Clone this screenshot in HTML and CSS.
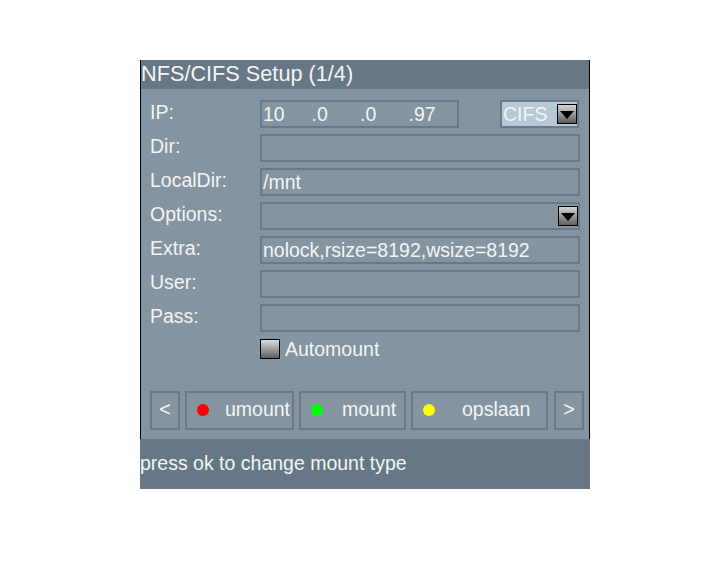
FILE: index.html
```html
<!DOCTYPE html>
<html lang="en">
<head>
    <meta charset="UTF-8">
    <title>NFS/CIFS Setup</title>
    <link rel="stylesheet" href="styles.css">
</head>
<body>
    <div class="screen">
        <div class="window">
            <div class="title">NFS/CIFS Setup (1/4)</div>
            <div class="content">
                <div class="row">
                    <span class="label">IP:</span>
                    <div class="field ip">
                        <span class="part">10</span>
                        <span class="part">.0</span>
                        <span class="part">.0</span>
                        <span class="part">.97</span>
                    </div>
                    <div class="select">
                        <span>CIFS</span>
                        <svg class="arrow" width="20" height="20" viewBox="0 0 20 20">
                            <defs>
                                <linearGradient id="g1" x1="0" y1="0" x2="0" y2="1">
                                    <stop offset="0" stop-color="#d8d8d8"/>
                                    <stop offset="1" stop-color="#5a5a5a"/>
                                </linearGradient>
                            </defs>
                            <rect x="0.5" y="0.5" width="19" height="19" fill="url(#g1)" stroke="#000"/>
                            <polygon points="3,7 17,7 10,15" fill="#000"/>
                        </svg>
                    </div>
                </div>
                <div class="row">
                    <span class="label">Dir:</span>
                    <div class="field"></div>
                </div>
                <div class="row">
                    <span class="label">LocalDir:</span>
                    <div class="field">/mnt</div>
                </div>
                <div class="row">
                    <span class="label">Options:</span>
                    <div class="field dropdown">
                        <svg class="arrow" width="20" height="20" viewBox="0 0 20 20">
                            <defs>
                                <linearGradient id="g2" x1="0" y1="0" x2="0" y2="1">
                                    <stop offset="0" stop-color="#d8d8d8"/>
                                    <stop offset="1" stop-color="#5a5a5a"/>
                                </linearGradient>
                            </defs>
                            <rect x="0.5" y="0.5" width="19" height="19" fill="url(#g2)" stroke="#000"/>
                            <polygon points="3,7 17,7 10,15" fill="#000"/>
                        </svg>
                    </div>
                </div>
                <div class="row">
                    <span class="label">Extra:</span>
                    <div class="field">nolock,rsize=8192,wsize=8192</div>
                </div>
                <div class="row">
                    <span class="label">User:</span>
                    <div class="field"></div>
                </div>
                <div class="row">
                    <span class="label">Pass:</span>
                    <div class="field"></div>
                </div>
                <div class="check-row">
                    <span class="checkbox"></span>
                    <span>Automount</span>
                </div>
                <div class="buttons">
                    <div class="btn nav">&lt;</div>
                    <div class="btn umount"><span class="dot red"></span><span>umount</span></div>
                    <div class="btn mount"><span class="dot green"></span><span>mount</span></div>
                    <div class="btn save"><span class="dot yellow"></span><span>opslaan</span></div>
                    <div class="btn nav next">&gt;</div>
                </div>
            </div>
        </div>
        <div class="status">press ok to change mount type</div>
    </div>
</body>
</html>
```

FILE: styles.css
```css
*{
    margin: 0;
    padding: 0;
    box-sizing: border-box;
}
body{
    background-color: #fff;
    font-family: "Liberation Sans", Arial, sans-serif;
    color: #f4f4f4;
}
.screen{
    width: 450px;
    margin: 60px 0 0 140px;
}
.window{
    border-left: 1px solid #000;
    border-right: 1px solid #000;
    background-color: #8494a1;
}
.title{
    height: 29px;
    line-height: 27px;
    font-size: 21.7px;
    background-color: #677785;
    white-space: nowrap;
}
.content{
    padding: 11px 9px 9px 9px;
}
.row{
    display: flex;
    align-items: center;
    height: 28px;
    margin-bottom: 6px;
}
.label{
    width: 110px;
    font-size: 19.5px;
    padding-bottom: 4px;
}
.field{
    width: 320px;
    height: 28px;
    border: 2px solid #6a7a88;
    font-size: 19.5px;
    line-height: 24px;
    padding-left: 1px;
    white-space: nowrap;
}
.field.ip{
    width: 199px;
    display: flex;
}
.part{
    width: 49px;
}
.select{
    margin-left: 41px;
    width: 79px;
    height: 28px;
    border: 2px solid #6a7a88;
    background-color: #b9c8d6;
    font-size: 19.5px;
    line-height: 24px;
    padding-left: 1px;
    display: flex;
    justify-content: space-between;
    align-items: center;
}
.arrow{
    display: block;
    flex-shrink: 0;
}
.field.dropdown{
    display: flex;
    justify-content: flex-end;
    align-items: center;
}
.check-row{
    display: flex;
    align-items: center;
    gap: 5px;
    margin: 5px 0 0 110px;
    height: 22px;
    font-size: 19.5px;
}
.checkbox{
    width: 20px;
    height: 20px;
    border: 1px solid #000;
    background: linear-gradient(#dcdcdc, #5e5e5e);
}
.buttons{
    display: flex;
    gap: 5px;
    margin-top: 31px;
}
.btn{
    flex-shrink: 0;
    height: 39px;
    border: 2px solid #6a7a88;
    font-size: 19.5px;
    display: flex;
    align-items: center;
    padding-bottom: 2px;
    white-space: nowrap;
}
.btn.nav{
    width: 30px;
    justify-content: center;
}
.btn.umount{
    width: 109px;
}
.btn.mount{
    width: 107px;
}
.btn.save{
    width: 137px;
}
.btn.next{
    margin-left: 1px;
}
.dot{
    flex-shrink: 0;
    width: 12px;
    height: 12px;
    border-radius: 50%;
    margin-left: 10px;
    margin-right: 16px;
}
.mount .dot{
    margin-right: 19px;
}
.save .dot{
    margin-right: 27px;
}
.red{ background-color: #ff0000; }
.green{ background-color: #00ff00; }
.yellow{ background-color: #ffff00; }
.status{
    height: 50px;
    background-color: #677785;
    font-size: 19.5px;
    line-height: 48px;
    white-space: nowrap;
}
```
